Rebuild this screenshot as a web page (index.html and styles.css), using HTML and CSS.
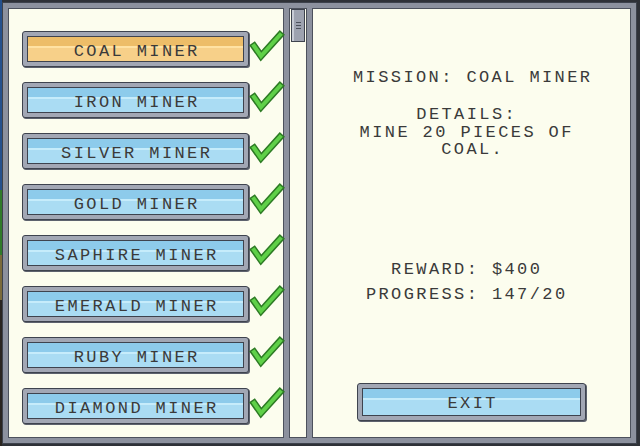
FILE: index.html
```html
<!DOCTYPE html>
<html lang="en">
<head>
<meta charset="utf-8">
<title>Missions</title>
<link rel="stylesheet" href="styles.css">
</head>
<body>
<div class="frame">
  <section class="panel list">
    <div class="row"><div class="btn coal"><span class="fill">COAL MINER</span></div><svg class="check" viewBox="0 0 32 30"><polyline class="edge" points="4,15 11,25 30,4"/><polyline class="tick" points="4,15 11,25 30,4"/></svg></div>
    <div class="row"><div class="btn"><span class="fill">IRON MINER</span></div><svg class="check" viewBox="0 0 32 30"><polyline class="edge" points="4,15 11,25 30,4"/><polyline class="tick" points="4,15 11,25 30,4"/></svg></div>
    <div class="row"><div class="btn"><span class="fill">SILVER MINER</span></div><svg class="check" viewBox="0 0 32 30"><polyline class="edge" points="4,15 11,25 30,4"/><polyline class="tick" points="4,15 11,25 30,4"/></svg></div>
    <div class="row"><div class="btn"><span class="fill">GOLD MINER</span></div><svg class="check" viewBox="0 0 32 30"><polyline class="edge" points="4,15 11,25 30,4"/><polyline class="tick" points="4,15 11,25 30,4"/></svg></div>
    <div class="row"><div class="btn"><span class="fill">SAPHIRE MINER</span></div><svg class="check" viewBox="0 0 32 30"><polyline class="edge" points="4,15 11,25 30,4"/><polyline class="tick" points="4,15 11,25 30,4"/></svg></div>
    <div class="row"><div class="btn"><span class="fill">EMERALD MINER</span></div><svg class="check" viewBox="0 0 32 30"><polyline class="edge" points="4,15 11,25 30,4"/><polyline class="tick" points="4,15 11,25 30,4"/></svg></div>
    <div class="row"><div class="btn"><span class="fill">RUBY MINER</span></div><svg class="check" viewBox="0 0 32 30"><polyline class="edge" points="4,15 11,25 30,4"/><polyline class="tick" points="4,15 11,25 30,4"/></svg></div>
    <div class="row"><div class="btn"><span class="fill">DIAMOND MINER</span></div><svg class="check" viewBox="0 0 32 30"><polyline class="edge" points="4,15 11,25 30,4"/><polyline class="tick" points="4,15 11,25 30,4"/></svg></div>
  </section>
  <div class="panel scroll">
    <div class="thumb"><i></i><i></i><i></i></div>
  </div>
  <section class="panel detail">
    <p class="mission">MISSION: COAL MINER</p>
    <p class="details"><span class="shift">DETAILS:</span><span class="shift">MINE 20 PIECES OF</span><span>COAL.</span></p>
    <p class="stats"><span class="shift">REWARD: $400</span><span class="shift">PROGRESS: 147/20</span></p>
    <div class="btn exit"><span class="fill">EXIT</span></div>
  </section>
</div>
</body>
</html>
```
FILE: styles.css
```css
html, body {
  margin: 0;
  padding: 0;
}

body {
  width: 640px;
  height: 446px;
  overflow: hidden;
  background:
    linear-gradient(#24508c 0 190px, #2f7a2a 190px 255px, #7a6a3a 255px 300px, #2a2520 300px) left top / 2px 100% no-repeat,
    #2e3137;
  font-family: "Liberation Mono", "DejaVu Sans Mono", monospace;
  color: #3a3a3a;
}

/* outer grey window frame holding the three panes */
.frame {
  margin: 2px 0 0 2px;
  width: 635px;
  height: 442px;
  box-sizing: border-box;
  border: 1px solid #3d424c;
  background: #8c919e;
  padding: 5px;
  display: flex;
  gap: 5px;
}

.panel {
  background: #fcfdee;
  border: 1px solid #4c515c;
  box-sizing: border-box;
}

/* mission list */
.list {
  width: 276px;
  padding: 22px 0 0 13px;
  display: flex;
  flex-direction: column;
  gap: 15px;
}

.row {
  display: flex;
  align-items: flex-start;
}

.btn {
  width: 227px;
  box-sizing: border-box;
  border: 1px solid #3e434e;
  border-radius: 3px;
  padding: 4px;
  background: #a2a7b4;
  box-shadow: 1px 1px 0 #5d626d;
}

.fill {
  display: block;
  height: 24px;
  border: 1px solid #3e434e;
  line-height: 29px;
  text-align: center;
  font-size: 17px;
  letter-spacing: 2.4px;
  padding-left: 2.4px;
  white-space: nowrap;
  background: linear-gradient(#8dcbeb 0 9px, #c6ecfb 9px 11px, #aadcf3 11px);
}

.coal .fill {
  background: linear-gradient(#edbd68 0 9px, #ffe2a3 9px 11px, #f7d089 11px);
}

.check {
  width: 32px;
  height: 30px;
  margin-left: 1px;
  overflow: visible;
}

.check polyline {
  fill: none;
  stroke-linecap: square;
  stroke-linejoin: miter;
}

.check .edge {
  stroke: #2d7a24;
  stroke-width: 7;
}

.check .tick {
  stroke: #5fd048;
  stroke-width: 4;
}

/* scroll track */
.scroll {
  width: 18px;
}

.thumb {
  margin: 0 1px;
  height: 33px;
  box-sizing: border-box;
  border: 1px solid #3e434e;
  background: linear-gradient(to right, #c8ccd5 0 2px, #9da2af 2px);
  display: flex;
  flex-direction: column;
  align-items: center;
  justify-content: center;
  gap: 2px;
}

.thumb i {
  display: block;
  width: 5px;
  height: 1px;
  background: #4c515c;
}

/* mission detail pane */
.detail {
  flex: 1;
  display: flex;
  flex-direction: column;
  align-items: center;
  font-size: 17px;
  letter-spacing: 2.4px;
}

.detail p {
  margin: 0;
  text-align: center;
  padding-left: 2.4px;
  white-space: nowrap;
}

.detail p span {
  display: block;
}

.detail .shift {
  padding-right: 12px;
}

.mission {
  margin-top: 60px !important;
  line-height: 18px;
}

.details {
  margin-top: 19px !important;
  line-height: 17.5px;
}

.stats {
  margin-top: 98px !important;
  line-height: 25px;
}

.exit {
  width: 229px;
  margin-top: 76px;
}

.exit .fill {
  height: 26px;
  line-height: 29px;
}
```
